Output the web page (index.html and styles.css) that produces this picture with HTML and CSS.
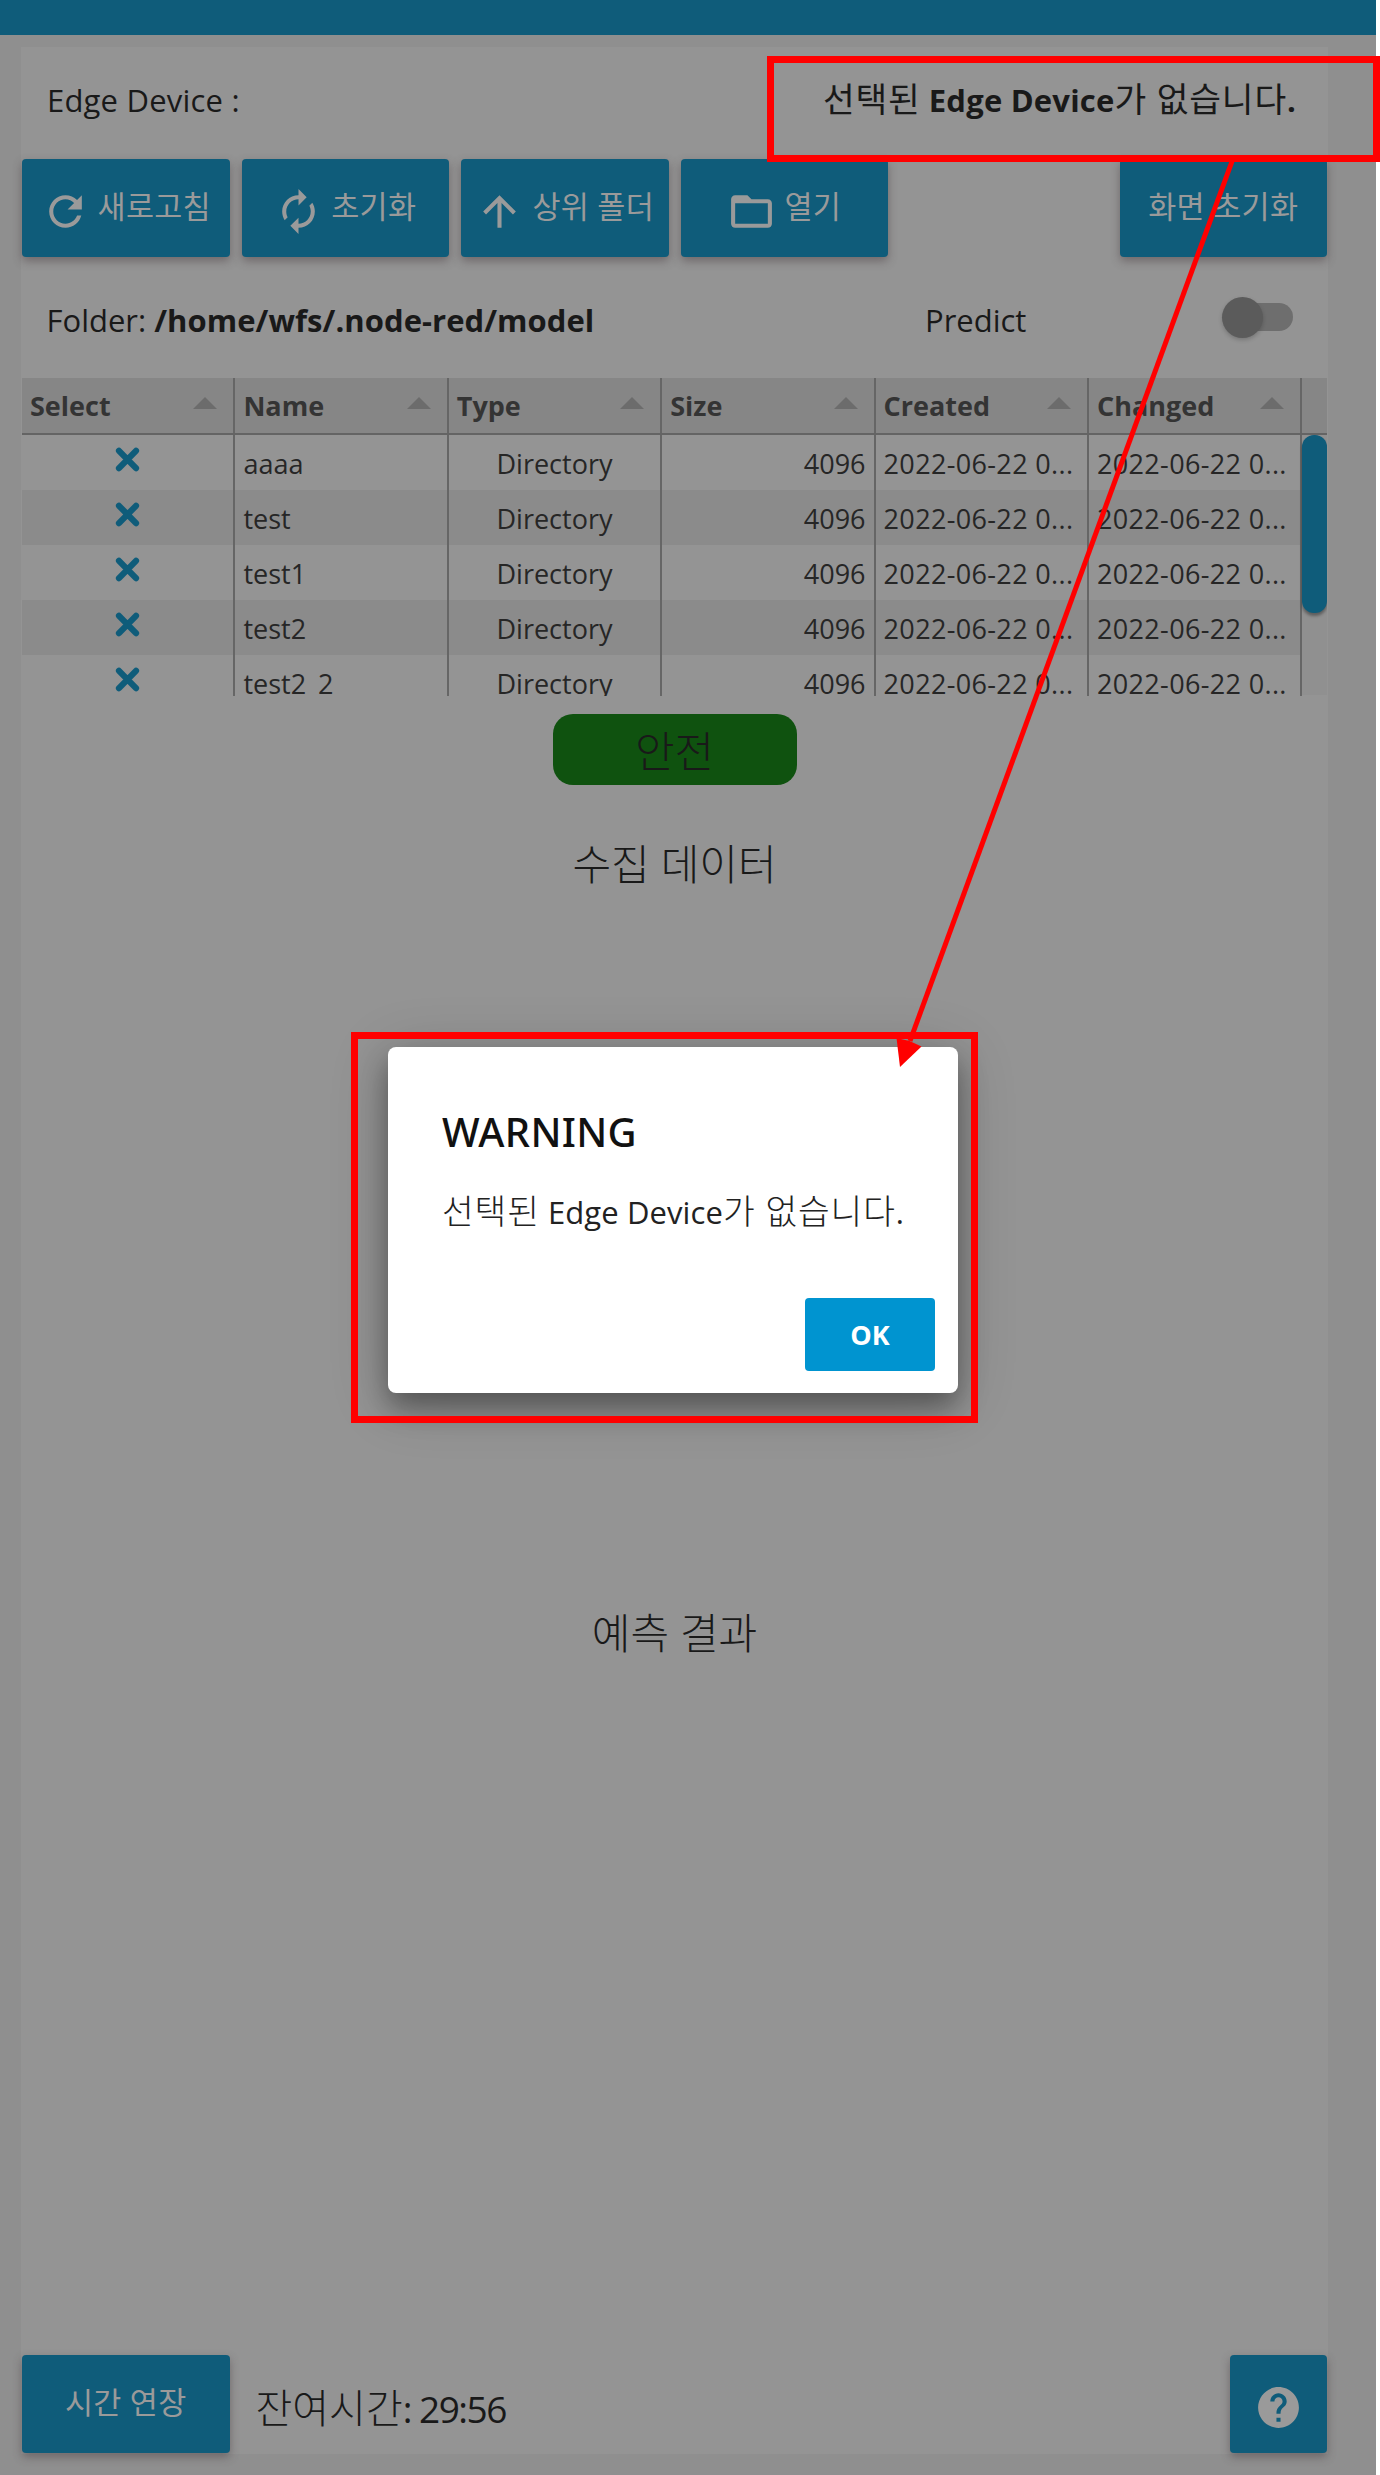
FILE: index.html
```html
<!DOCTYPE html>
<html lang="ko">
<head>
<meta charset="utf-8">
<title>Edge Device</title>
<link rel="stylesheet" href="styles.css">
</head>
<body>
<svg class="defs" aria-hidden="true">
  <symbol id="cross" viewBox="0 0 25 25"><path d="M4 3.8L21 21.2M21 3.8L4 21.2" stroke="#0f5c7a" stroke-width="6.2" stroke-linecap="round"/></symbol>
</svg>
<div class="app">
  <header class="topbar"></header>
  <main class="card">
    <div class="device-row">
      <span class="device-label">Edge Device :</span>
      <strong class="device-value"><span class="ko">선택된</span> Edge Device<span class="ko">가 없습니다</span>.</strong>
    </div>

    <div class="toolbar">
      <button class="btn"><svg class="icon" viewBox="0 0 24 24"><path d="M17.65 6.35C16.2 4.9 14.21 4 12 4c-4.42 0-7.99 3.58-7.99 8s3.57 8 7.99 8c3.73 0 6.84-2.55 7.73-6h-2.08c-.82 2.33-3.04 4-5.65 4-3.31 0-6-2.69-6-6s2.69-6 6-6c1.66 0 3.14.69 4.22 1.78L13 11h7V4l-2.35 2.35z"/></svg><span class="label">새로고침</span></button>
      <button class="btn"><svg class="icon" viewBox="0 0 24 24"><path d="M12 6v3l4-4-4-4v3c-4.42 0-8 3.58-8 8 0 1.57.46 3.03 1.24 4.26L6.7 14.8c-.45-.83-.7-1.79-.7-2.8 0-3.31 2.69-6 6-6zm6.76 1.74L17.3 9.2c.44.84.7 1.79.7 2.8 0 3.31-2.69 6-6 6v-3l-4 4 4 4v-3c4.42 0 8-3.58 8-8 0-1.57-.46-3.03-1.24-4.26z"/></svg><span class="label">초기화</span></button>
      <button class="btn"><svg class="icon" viewBox="0 0 24 24"><path d="M4 12l1.41 1.41L11 7.83V20h2V7.83l5.58 5.59L20 12l-8-8-8 8z"/></svg><span class="label">상위 폴더</span></button>
      <button class="btn"><svg class="icon" viewBox="0 0 24 24"><path d="M20 6h-8l-2-2H4c-1.1 0-1.99.9-1.99 2L2 18c0 1.1.9 2 2 2h16c1.1 0 2-.9 2-2V8c0-1.1-.9-2-2-2zm0 12H4V8h16v10z"/></svg><span class="label">열기</span></button>
      <button class="btn btn-last"><span class="label">화면 초기화</span></button>
    </div>

    <div class="folder-row">
      <span class="folder">Folder: <strong>/home/wfs/.node-red/model</strong></span>
      <span class="predict">Predict</span>
      <span class="switch"><span class="thumb"></span></span>
    </div>

    <div class="table">
      <div class="thead">
        <div class="th">Select<i class="sort"></i></div>
        <div class="th">Name<i class="sort"></i></div>
        <div class="th">Type<i class="sort"></i></div>
        <div class="th">Size<i class="sort"></i></div>
        <div class="th">Created<i class="sort"></i></div>
        <div class="th">Changed<i class="sort"></i></div>
      </div>
      <div class="tbody">
        <div class="rows">
          <div class="tr"><div class="td mark"><svg><use href="#cross"/></svg></div><div class="td">aaaa</div><div class="td center">Directory</div><div class="td right">4096</div><div class="td date">2022-06-22 0...</div><div class="td date">2022-06-22 0...</div></div>
          <div class="tr"><div class="td mark"><svg><use href="#cross"/></svg></div><div class="td">test</div><div class="td center">Directory</div><div class="td right">4096</div><div class="td date">2022-06-22 0...</div><div class="td date">2022-06-22 0...</div></div>
          <div class="tr"><div class="td mark"><svg><use href="#cross"/></svg></div><div class="td">test1</div><div class="td center">Directory</div><div class="td right">4096</div><div class="td date">2022-06-22 0...</div><div class="td date">2022-06-22 0...</div></div>
          <div class="tr"><div class="td mark"><svg><use href="#cross"/></svg></div><div class="td">test2</div><div class="td center">Directory</div><div class="td right">4096</div><div class="td date">2022-06-22 0...</div><div class="td date">2022-06-22 0...</div></div>
          <div class="tr"><div class="td mark"><svg><use href="#cross"/></svg></div><div class="td">test2_2</div><div class="td center">Directory</div><div class="td right">4096</div><div class="td date">2022-06-22 0...</div><div class="td date">2022-06-22 0...</div></div>
        </div>
        <div class="track"><div class="handle"></div></div>
      </div>
    </div>

    <div class="status">안전</div>
    <h2 class="chart-title">수집 데이터</h2>
    <h2 class="chart-title result-title">예측 결과</h2>

    <footer class="footer">
      <button class="btn extend"><span class="label">시간 연장</span></button>
      <span class="remain"><span class="remain-ko">잔여시간</span>: 29:56</span>
      <button class="btn help"><svg class="icon" viewBox="0 0 24 24"><path d="M12 2C6.48 2 2 6.48 2 12s4.48 10 10 10 10-4.48 10-10S17.52 2 12 2zm1 17h-2v-2h2v2zm2.07-7.75l-.9.92C13.45 12.9 13 13.5 13 15h-2v-.5c0-1.1.45-2.1 1.17-2.83l1.24-1.26c.37-.36.59-.86.59-1.41 0-1.1-.9-2-2-2s-2 .9-2 2H8c0-2.21 1.79-4 4-4s4 1.79 4 4c0 .88-.36 1.68-.93 2.25z"/></svg></button>
    </footer>
  </main>
</div>

<section class="dialog">
  <h3>WARNING</h3>
  <p><span class="ko">선택된</span> Edge Device<span class="ko">가 없습니다</span>.</p>
  <button class="ok">OK</button>
</section>

<svg class="callouts" viewBox="0 0 1380 2475" fill="none" stroke="#f00">
  <rect x="770.5" y="59.5" width="606" height="99" stroke-width="7"/>
  <rect x="354.5" y="1035.5" width="620" height="384" stroke-width="7"/>
  <path d="M1232.5 160L910 1041" stroke-width="5"/>
  <path d="M900 1067L896.500 1038L909.500 1041L921.500 1046.500Z" fill="#f00" stroke="none"/>
</svg>
</body>
</html>
```
FILE: styles.css
```css
* { box-sizing: border-box; }

body {
  margin: 0;
  position: relative;
  width: 1380px;
  height: 2475px;
  overflow: hidden;
  background: #fff;
  color: #191919;
  font: 31px/42px "Open Sans", "Noto Sans CJK KR", sans-serif;
}

.defs { display: none; }

.app {
  width: 1376px;
  height: 2475px;
  background: #8f8f8f;
}

.topbar {
  height: 34.5px;
  background: #0f5c7a;
}

.card {
  display: flex;
  flex-direction: column;
  width: 1307px;
  height: 2407px;
  margin: 12.5px 0 0 21px;
  padding: 0 1px;
  background: #949494;
}

.ko {
  font-size: 34.5px;
  line-height: 1;
}

/* device and folder lines */
.device-row {
  display: flex;
  justify-content: space-between;
  align-items: center;
  height: 112px;
  padding: 0 31px 6px 25px;
}

.device-label { letter-spacing: .2px; }
.device-value { letter-spacing: .2px; }
.device-value .ko { font-weight: 400; letter-spacing: .8px; }

.folder-row {
  display: flex;
  align-items: center;
  height: 121.500px;
  padding: 5px 34px 0 24.5px;
}

.folder { width: 878.5px; }
.folder strong { letter-spacing: .05px; }

.switch {
  width: 65px;
  height: 28px;
  margin: -5px 0 0 auto;
  border-radius: 14px;
  background: #6e6e6e;
}

.thumb {
  display: block;
  width: 41px;
  height: 41px;
  margin: -6.5px 0 0 -6px;
  border-radius: 50%;
  background: #5b5b5b;
  box-shadow: 0 2px 4px rgba(0, 0, 0, .2);
}

/* buttons */
.toolbar {
  display: flex;
  gap: 12px;
  height: 97.500px;
}

.btn {
  display: flex;
  flex: none;
  align-items: center;
  justify-content: center;
  width: 207.500px;
  height: 97.500px;
  padding: 0;
  border: 0;
  border-radius: 4px;
  background: #0f5c7a;
  color: #9a9a9a;
  font: inherit;
  box-shadow: 0 4px 10px rgba(60, 45, 50, .42);
}

.btn-last { margin-left: auto; }

.label {
  margin-top: -4px;
  font-size: 30.500px;
  letter-spacing: .3px;
}

.icon {
  width: 49px;
  height: 49px;
  margin: 8px 8px 0 0;
  fill: #9a9a9a;
}

/* file table */
.table {
  height: 317.500px;
  overflow: hidden;
  color: #262626;
  font-size: 27px;
}

.thead {
  display: flex;
  height: 57px;
  border-bottom: 2px solid #646464;
  background: #868686;
  color: #343434;
  font-weight: 700;
}

.th {
  display: flex;
  align-items: center;
  justify-content: space-between;
  width: 213.400px;
  padding: 1px 16px 0 8px;
  border-right: 2px solid #666;
}

.sort {
  margin-top: -6px;
  border: 12px solid transparent;
  border-top: 0;
  border-bottom: 12px solid #6c6c6c;
}

.tbody { display: flex; }
.rows { flex: none; }

.tr {
  display: flex;
  height: 55px;
}

.tr:nth-child(even) { background: #8b8b8b; }

.td {
  width: 213.400px;
  padding: 8px 8px 0;
  border-right: 2px solid #666;
  white-space: nowrap;
}

.center { text-align: center; }
.right { text-align: right; }
.date { letter-spacing: .35px; }

.mark {
  display: flex;
  justify-content: center;
  padding-top: 12px;
}

.mark svg { width: 25px; height: 25px; }

.track {
  flex: 1;
  height: 260px;
  background: #909090;
}

.handle {
  height: 178px;
  border-radius: 12px;
  background: #0f5c7a;
  box-shadow: 0 3px 3px rgba(0, 0, 0, .35);
}

/* prediction status and charts */
.status {
  align-self: center;
  width: 244px;
  height: 71.500px;
  margin-top: 18px;
  border-radius: 20px;
  background: #0f520f;
  font-size: 43px;
  font-weight: 300;
  line-height: 76px;
  text-align: center;
}

.chart-title {
  margin: 49px 0 0;
  font-size: 42px;
  font-weight: 300;
  line-height: 60px;
  text-align: center;
}

.result-title { margin-top: 709px; }

.footer {
  display: flex;
  align-items: center;
  margin-top: auto;
  padding-bottom: 1.500px;
}

.remain {
  margin: 11px 0 0 26px;
  font-size: 37px;
  letter-spacing: -1.500px;
}

.remain-ko {
  font-size: 40px;
  font-weight: 300;
  letter-spacing: 0;
  line-height: 1;
}

.help { width: 97.500px; margin-left: auto; }
.help .icon { margin: 8px 0 0; }

/* warning dialog */
.dialog {
  position: absolute;
  left: 388px;
  top: 1047px;
  display: flex;
  flex-direction: column;
  width: 570px;
  height: 346px;
  padding: 55px 23px 22.500px 54px;
  border-radius: 8px;
  background: #fff;
  box-shadow: 0 15px 28px rgba(0, 0, 0, .34), 0 8px 60px rgba(0, 0, 0, .2);
}

.dialog h3 {
  margin: 0;
  color: #111;
  font: 500 40px/60px "Noto Sans", sans-serif;
  letter-spacing: .3px;
}

.dialog p {
  margin: 29px 0 0;
  color: #222;
  letter-spacing: .1px;
  white-space: nowrap;
}

.dialog .ko { font-weight: 300; letter-spacing: .85px; }

.ok {
  align-self: flex-end;
  width: 130px;
  height: 73px;
  margin-top: auto;
  padding: 0;
  border: 0;
  border-radius: 4px;
  background: #0094d0;
  color: #fff;
  font: 700 27px/71px "Open Sans", sans-serif;
}

.callouts {
  position: absolute;
  left: 0;
  top: 0;
  width: 1380px;
  height: 2475px;
}
```
